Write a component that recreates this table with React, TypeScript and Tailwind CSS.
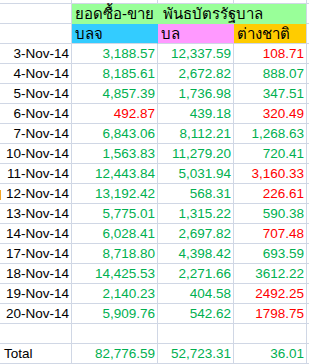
const G = "text-[#00b050]";
const R = "text-[#ff0000]";

type Row = { d: string; a: [string, boolean]; b: [string, boolean]; c: [string, boolean] };

// [value, isRed]
const ROWS: Row[] = [
    { d: "3-Nov-14", a: ["3,188.57", false], b: ["12,337.59", false], c: ["108.71", true] },
    { d: "4-Nov-14", a: ["8,185.61", false], b: ["2,672.82", false], c: ["888.07", false] },
    { d: "5-Nov-14", a: ["4,857.39", false], b: ["1,736.98", false], c: ["347.51", false] },
    { d: "6-Nov-14", a: ["492.87", true], b: ["439.18", false], c: ["320.49", true] },
    { d: "7-Nov-14", a: ["6,843.06", false], b: ["8,112.21", false], c: ["1,268.63", false] },
    { d: "10-Nov-14", a: ["1,563.83", false], b: ["11,279.20", false], c: ["720.41", false] },
    { d: "11-Nov-14", a: ["12,443.84", false], b: ["5,031.94", false], c: ["3,160.33", true] },
    { d: "12-Nov-14", a: ["13,192.42", false], b: ["568.31", false], c: ["226.61", true] },
    { d: "13-Nov-14", a: ["5,775.01", false], b: ["1,315.22", false], c: ["590.38", false] },
    { d: "14-Nov-14", a: ["6,028.41", false], b: ["2,697.82", false], c: ["707.48", true] },
    { d: "17-Nov-14", a: ["8,718.80", false], b: ["4,398.42", false], c: ["693.59", false] },
    { d: "18-Nov-14", a: ["14,425.53", false], b: ["2,271.66", false], c: ["3612.22", false] },
    { d: "19-Nov-14", a: ["2,140.23", false], b: ["404.58", false], c: ["2492.25", true] },
    { d: "20-Nov-14", a: ["5,909.76", false], b: ["542.62", false], c: ["1798.75", true] },
];

const cell = "h-[20px] border-r border-b border-[#d0d7e5] leading-[19px] whitespace-nowrap";

function Num({ v }: { v: [string, boolean] }) {
    return <div className={`${cell} text-right pr-[2px] ${v[1] ? R : G}`}>{v[0]}</div>;
}

export default function App() {
    return (
        <div
            className="w-[309px] h-[364px] overflow-hidden bg-white text-black text-[13.5px]"
            style={{ fontFamily: '"Liberation Sans", "DejaVu Sans", sans-serif' }}
        >
            <div className="grid grid-cols-[72px_86px_76px_73px_2px]">
                {/* partial top row */}
                <div className="h-[4px] border-r border-b border-[#d0d7e5]" />
                <div className="h-[4px] border-r border-b border-[#d0d7e5]" />
                <div className="h-[4px] border-r border-b border-[#d0d7e5]" />
                <div className="h-[4px] border-r border-b border-[#d0d7e5]" />
                <div className="h-[4px] border-b border-[#d0d7e5]" />

                {/* title row */}
                <div className={cell} />
                <div className="h-[20px] bg-[#99ff99] border-r border-b border-[#99ff99] leading-[19px] pl-[3px] whitespace-nowrap text-[15px]">
                    ยอดซื้อ-ขาย
                </div>
                <div className="relative z-10 h-[20px] bg-[#99ff99] border-r border-b border-[#99ff99] leading-[19px] pl-[5px] whitespace-nowrap text-[15px]">
                    พันธบัตรรัฐบาล
                </div>
                <div className="h-[20px] bg-[#99ff99] border-r border-b border-[#d0d7e5] border-b-[#99ff99]" />
                <div className="h-[20px] border-b border-[#d0d7e5]" />

                {/* column headers */}
                <div className={cell} />
                <div className="h-[20px] bg-[#33ccff] border-r border-b border-[#33ccff] border-b-[#d0d7e5] leading-[19px] pl-[3px] text-[15px]">บลจ</div>
                <div className="h-[20px] bg-[#ff99ff] border-r border-b border-[#ff99ff] border-b-[#d0d7e5] leading-[19px] pl-[3px] text-[15px]">บล</div>
                <div className="h-[20px] bg-[#ffcc00] border-r border-b border-[#d0d7e5] leading-[19px] pl-[3px] text-[15px]">ต่างชาติ</div>
                <div className="h-[20px] border-b border-[#d0d7e5]" />

                {ROWS.map((r) => (
                    <div key={r.d} className="contents">
                        <div className={`${cell} relative text-right pr-[2px]`}>
                            {r.d === "12-Nov-14" && (
                                <span className="absolute left-0 top-[6px] h-[10px] w-px bg-[#f5a623]" />
                            )}
                            {r.d}
                        </div>
                        <Num v={r.a} />
                        <Num v={r.b} />
                        <Num v={r.c} />
                        <div className="h-[20px] border-b border-[#d0d7e5]" />
                    </div>
                ))}

                {/* blank row */}
                <div className={cell} />
                <div className={cell} />
                <div className={cell} />
                <div className={cell} />
                <div className="h-[20px] border-b border-[#d0d7e5]" />

                {/* totals */}
                <div className={`${cell} pl-[4px]`}>Total</div>
                <Num v={["82,776.59", false]} />
                <Num v={["52,723.31", false]} />
                <Num v={["36.01", false]} />
                <div className="h-[20px] border-b border-[#d0d7e5]" />
            </div>
        </div>
    );
}
